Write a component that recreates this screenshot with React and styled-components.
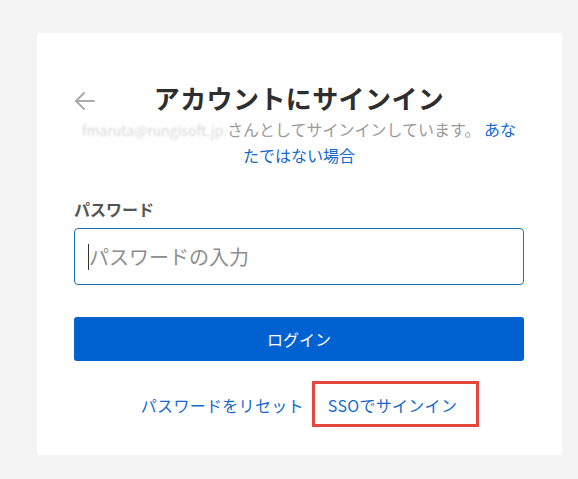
import React from "react";
import styled, { createGlobalStyle } from "styled-components";

const GlobalStyle = createGlobalStyle`
  html, body {
    margin: 0;
    padding: 0;
    background: #f4f4f4;
  }
  body {
    font-family: "Noto Sans CJK JP", "Noto Sans", "Liberation Sans", sans-serif;
  }
`;

const Page = styled.div`
  padding: 33px 16px 24px 37px;
  min-height: 479px;
  box-sizing: border-box;
`;

const Card = styled.div`
  width: 525px;
  box-sizing: border-box;
  background: #fff;
  border-radius: 3px;
  padding: 47px 38px 38px 37px;
`;

const Header = styled.div`
  display: grid;
  grid-template-columns: 1fr auto 1fr;
  align-items: center;
`;

const BackButton = styled.button`
  border: none;
  background: none;
  padding: 0;
  margin: 5px 0 0 -1px;
  width: 24px;
  height: 24px;
  display: flex;
  align-items: center;
  cursor: pointer;
  color: #ababab;
`;

const Title = styled.h1`
  margin: 0;
  font-size: 26px;
  line-height: 36px;
  font-weight: 700;
  color: #2e2e2e;
  letter-spacing: 0.4px;
`;

const Subtitle = styled.p`
  margin: 1px 0 0;
  font-size: 16px;
  line-height: 25px;
  color: #9a9a9a;
  text-align: center;
`;

const Email = styled.span`
  color: #d6d6d6;
  filter: blur(0.8px);
  font-size: 14px;
`;

const Link = styled.a`
  color: #1469d0;
  text-decoration: none;
  cursor: pointer;
`;

const Label = styled.label`
  display: block;
  margin-top: 30px;
  font-size: 16px;
  line-height: 22px;
  font-weight: 700;
  color: #555;
`;

const Field = styled.div`
  position: relative;
  margin-top: 8px;
`;

const Input = styled.input`
  display: block;
  width: 100%;
  height: 57px;
  box-sizing: border-box;
  border: 1px solid #1c72b0;
  border-radius: 4px;
  padding: 0 14px;
  font-family: inherit;
  font-size: 20px;
  color: #333;
  outline: none;
  &::placeholder {
    color: #8d8d8d;
  }
`;

const Caret = styled.span`
  position: absolute;
  left: 14px;
  top: 16px;
  width: 1px;
  height: 26px;
  background: #333;
`;

const LoginButton = styled.button`
  display: block;
  width: 100%;
  height: 44px;
  margin-top: 32px;
  border: none;
  border-radius: 3px;
  background: #0061d1;
  color: #fff;
  font-family: inherit;
  font-size: 16px;
  cursor: pointer;
`;

const Links = styled.div`
  display: flex;
  justify-content: center;
  gap: 24px;
  margin-top: 32px;
  font-size: 16px;
  line-height: 24px;
  letter-spacing: 0.3px;
`;

const Highlighted = styled(Link)`
  position: relative;
  &::after {
    content: "";
    position: absolute;
    left: -16px;
    right: -22px;
    top: -12px;
    bottom: -10px;
    border: 3px solid #e4473e;
  }
`;

const ArrowLeft = () => (
  <svg width="24" height="24" viewBox="0 0 24 24" fill="none" stroke="currentColor" strokeWidth="2" strokeLinecap="round" strokeLinejoin="round">
    <path d="M21 12H3" />
    <path d="M11 4l-8 8 8 8" />
  </svg>
);

export default function App() {
  return (
    <>
      <GlobalStyle />
      <Page>
        <Card>
          <Header>
            <BackButton aria-label="戻る">
              <ArrowLeft />
            </BackButton>
            <Title>アカウントにサインイン</Title>
            <span />
          </Header>
          <Subtitle>
            <Email>fmaruta@rungisoft.jp</Email> さんとしてサインインしています。 <Link>あなたではない場合</Link>
          </Subtitle>
          <Label htmlFor="password">パスワード</Label>
          <Field>
            <Input id="password" type="password" placeholder="パスワードの入力" />
            <Caret />
          </Field>
          <LoginButton>ログイン</LoginButton>
          <Links>
            <Link>パスワードをリセット</Link>
            <Highlighted>SSOでサインイン</Highlighted>
          </Links>
        </Card>
      </Page>
    </>
  );
}
